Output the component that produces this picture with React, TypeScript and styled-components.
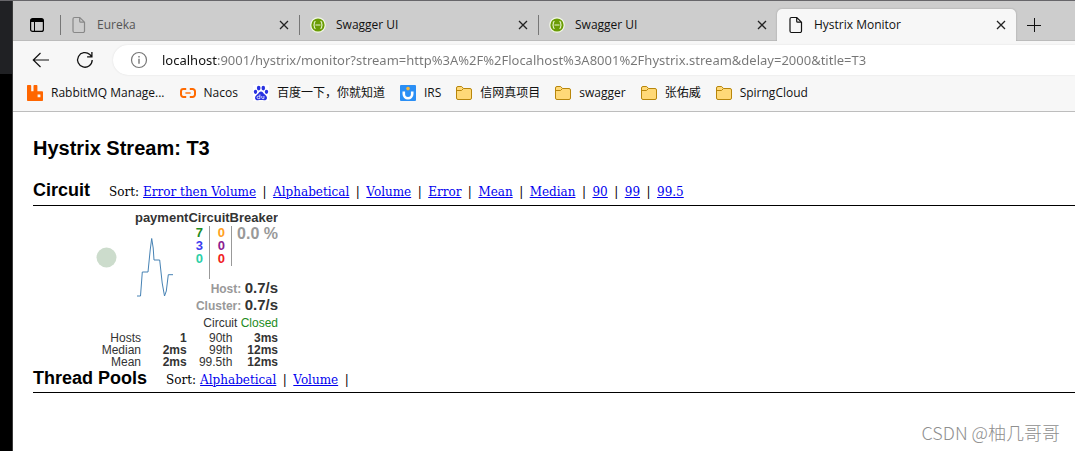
import React from "react";
import styled, { createGlobalStyle } from "styled-components";

const GlobalStyle = createGlobalStyle`
  * { box-sizing: border-box; }
  body { margin: 0; background: #fff; color: #000; }
  button { border: 0; padding: 0; background: none; font: inherit; color: inherit; cursor: pointer; }
  h1, h2, h3, ul, p { margin: 0; padding: 0; }
`;

const uiFont = `"Open Sans", "Noto Sans CJK SC", sans-serif`;
const pageFont = `"Liberation Sans", sans-serif`;

const Desktop = styled.div`
  display: flex;
  min-height: 100vh;
  position: relative;
  border-top: 1px solid #67666a;
`;

const Backdrop = styled.div`
  flex: 0 0 13px;
  border-right: 1px solid #3a3a3a;
  background: linear-gradient(#202124 73px, #000 73px);
`;

const BrowserWindow = styled.div`
  flex: 1;
  min-width: 0;
  display: flex;
  flex-direction: column;
`;

const TabBar = styled.header`
  display: flex;
  height: 40px;
  padding-top: 8px;
  background: #cdcdcd;
  box-shadow: inset 0 -1px #bcbcbc;
  font: 12px/32px ${uiFont};
`;

const TabActions = styled.button`
  flex: 0 0 47px;
  display: flex;
  align-items: center;
  justify-content: center;
`;

const Tabs = styled.div`
  display: flex;
  min-width: 0;
`;

const Tab = styled.div<{ $active?: boolean }>`
  flex: 0 1 239px;
  width: 239px;
  min-width: 0;
  display: flex;
  align-items: center;
  padding-right: 8px;
  border-radius: 5px 5px 0 0;
  background: ${(p) => (p.$active ? "#f7f7f7" : "none")};
  box-shadow: ${(p) => (p.$active ? "0 0 2px #999" : "none")};
  clip-path: inset(-4px -4px 0 -4px);

  &::before {
    content: "";
    flex: 0 0 1px;
    height: 20px;
    background: ${(p) => (p.$active ? "none" : "#777")};
  }
`;

const TabLabel = styled.button<{ $muted?: boolean }>`
  flex: 1;
  min-width: 0;
  display: flex;
  align-items: center;
  gap: 9px;
  padding-left: 9px;
  color: ${(p) => (p.$muted ? "#555" : "#111")};
`;

const TabIcon = styled.span`
  flex: 0 0 18px;
  display: flex;
  justify-content: center;
`;

const IconButton = styled.button<{ $size: number }>`
  flex: 0 0 ${(p) => p.$size}px;
  height: ${(p) => p.$size}px;
  display: flex;
  align-items: center;
  justify-content: center;
`;

const NewTab = styled(IconButton)`
  align-self: center;
  margin-left: 2px;
`;

const Toolbar = styled.div`
  display: flex;
  align-items: center;
  gap: 12px;
  height: 37px;
  padding-left: 12px;
  background: #f7f7f7;
`;

const AddressBar = styled.label`
  flex: 1;
  min-width: 0;
  display: flex;
  align-items: center;
  height: 30px;
  padding-left: 17px;
  gap: 14px;
  border-radius: 15px 0 0 15px;
  background: #fff;
  box-shadow: 0 0 2px #ddd;
`;

/* The host part of the address is darker than the port and path. */
const AddressInput = styled.input`
  flex: 1;
  min-width: 0;
  height: 24px;
  padding: 0;
  border: 0;
  outline: 0;
  font: 13px/24px "Noto Sans", sans-serif;
  color: transparent;
  background: linear-gradient(90deg, #111 56px, #767676 56px);
  background-clip: text;
  -webkit-background-clip: text;
`;

const Bookmarks = styled.nav`
  display: flex;
  align-items: center;
  gap: 15px;
  height: 34px;
  padding: 0 0 4px 14px;
  background: #f7f7f7;
  border-bottom: 1px solid #bdbdbd;
  font: 12px/20px ${uiFont};
`;

const Bookmark = styled.a`
  display: flex;
  align-items: center;
  gap: 8px;
  color: #111;
  text-decoration: none;
  white-space: nowrap;
`;

const Page = styled.main`
  padding: 24px 0 0 20px;
`;

const Title = styled.h1`
  font: bold 20px/24px ${pageFont};
`;

const SectionHeader = styled.div<{ $spaced?: boolean }>`
  display: flex;
  align-items: baseline;
  gap: 19px;
  height: ${(p) => (p.$spaced ? 46 : 27)}px;
  padding-top: ${(p) => (p.$spaced ? 20 : 2)}px;
  border-bottom: 1px solid #000;
`;

const SectionTitle = styled.h2`
  font: bold 18px/20px ${pageFont};
`;

const SortBar = styled.nav`
  display: flex;
  font: 12px/18px "DejaVu Serif", serif;
  white-space: nowrap;
`;

const SortLabel = styled.span`
  margin-right: 4px;
`;

const SortLink = styled.a`
  color: #00e;
`;

const Divider = styled.span`
  width: 17px;
  text-align: center;
`;

const Monitor = styled.article`
  width: 245px;
  height: 160px;
  padding-top: 4px;
  overflow: hidden;
  color: #333;
  font: 12px/12px ${pageFont};
`;

const CircuitName = styled.h3`
  font: bold 13px/16px ${pageFont};
  text-align: right;
`;

const Summary = styled.div`
  display: flex;
  height: 54px;
  justify-content: flex-end;
`;

const Chart = styled.svg`
  flex: 1;
  height: 74px;
`;

const Counters = styled.div<{ $tall?: boolean }>`
  display: flex;
  flex-direction: column;
  align-items: flex-end;
  height: ${(p) => (p.$tall ? 53 : 40)}px;
  padding-right: 6px;
  border-right: 1px solid #999;
  width: ${(p) => (p.$tall ? 27 : 22)}px;
  font: bold 13px/13px ${pageFont};
`;

const Counter = styled.span<{ $color: string }>`
  color: ${(p) => p.$color};
`;

const ErrorRate = styled.div`
  width: 46px;
  text-align: right;
  font: bold 16px/16px ${pageFont};
  color: #999;
`;

const Rate = styled.p`
  height: 17px;
  text-align: right;
  font: bold 12px/16px ${pageFont};
  color: #999;
`;

const RateValue = styled.strong`
  font-size: 15px;
  color: #333;
`;

const Status = styled.p`
  padding: 1px 0;
  line-height: 16px;
  text-align: right;
`;

const Closed = styled.span`
  color: #228b22;
`;

const Latency = styled.table`
  width: 100%;
  table-layout: fixed;
  border-collapse: collapse;
  line-height: 12px;
  text-align: right;

  th, td { padding: 0; text-align: right; }
  th { font-weight: normal; }
  th:first-child { width: 108px; }
  td { font-weight: bold; }
`;

const Watermark = styled.div`
  position: absolute;
  right: 15px;
  bottom: 6px;
  font: 300 18px/26px "Noto Sans CJK SC", sans-serif;
  color: #8f8f8f;
`;

const PageIcon = ({ color }: { color: string }) => (
  <svg width="14" height="18" viewBox="0 0 14 18" fill="none" stroke={color} strokeWidth="1.2">
    <path d="M2.5 1.5h5.3l4.7 4.7v8.8a1.5 1.5 0 0 1-1.5 1.500H2.500A1.500 1.500 0 0 1 1 15V3a1.500 1.500 0 0 1 1.500-1.500zM7.700 1.500v3.700a1 1 0 0 0 1 1h3.800" />
  </svg>
);

const SwaggerIcon = () => (
  <svg width="16" height="16" viewBox="0 0 16 16">
    <circle cx="8" cy="8" r="7.8" fill="#f3f8e8" />
    <circle cx="8" cy="8" r="6.6" fill="#6a9c05" />
    <path d="M5.6 4.6q-1.4 0-1.3 1.4v1q0 1-.9 1 .9 0 .9 1v1q0 1.4 1.3 1.4M10.4 4.6q1.4 0 1.3 1.4v1q0 1 .9 1-.9 0-.9 1v1q0 1.4-1.3 1.4M5.5 8h5" fill="none" stroke="#e8f3cf" strokeWidth="1.1" />
  </svg>
);

const CloseIcon = () => (
  <svg width="10" height="10" viewBox="0 0 10 10" stroke="#222" strokeWidth="1.3">
    <path d="M1 1l8 8M9 1l-8 8" />
  </svg>
);

const PlusIcon = () => (
  <svg width="14" height="14" viewBox="0 0 14 14" stroke="#111" strokeWidth="1">
    <path d="M7.5 0v14M0 7.5h14" />
  </svg>
);

const TabActionsIcon = () => (
  <svg width="14" height="14" viewBox="0 0 14 14" fill="none" stroke="#000">
    <rect x=".6" y=".6" width="12.8" height="12.8" rx="2" strokeWidth="1.2" />
    <path d="M1 2.5h12" strokeWidth="3" />
    <path d="M4.5 3v10.5" strokeWidth="1" />
  </svg>
);

const BackIcon = () => (
  <svg width="18" height="16" viewBox="0 0 18 16" fill="none" stroke="#111" strokeWidth="1.2">
    <path d="M8.5 1L1.3 8l7.2 7M1.3 8H17" />
  </svg>
);

const ReloadIcon = () => (
  <svg width="18" height="18" viewBox="0 0 18 18" fill="none" stroke="#111" strokeWidth="1.3">
    <path d="M16.2 9A7.3 7.3 0 1 1 13.8 3.500L15.700 5.600M15.900 1v4.800h-4.800" />
  </svg>
);

const InfoIcon = () => (
  <svg width="18" height="18" viewBox="0 0 18 18" fill="none" stroke="#777" strokeWidth="1.2">
    <circle cx="9" cy="9" r="7.5" />
    <path d="M9 7.8v5M9 5v1.4" strokeWidth="1.4" />
  </svg>
);

const RabbitIcon = () => (
  <svg width="16" height="16" viewBox="0 0 16 16">
    <path fill="#f60" fillRule="evenodd" d="M.8 0h2.6q.8 0 .8.8v5.4h2.3V.8q0-.8.8-.8h2.3q.8 0 .8.8v5.4h4.8q.8 0 .8.8v8.2q0 .8-.8.8H.8q-.8 0-.8-.8V.8Q0 0 .8 0zm9.8 9.4v2.8h2.800V9.400z" />
  </svg>
);

const NacosIcon = () => (
  <svg width="16" height="16" viewBox="0 0 16 16" fill="none" stroke="#ff6a00" strokeWidth="2">
    <path d="M6.200 4H3.400A2.400 2.400 0 0 0 1 6.400v3.200A2.400 2.400 0 0 0 3.400 12h2.800M9.800 4h2.800A2.400 2.400 0 0 1 15 6.400v3.200a2.400 2.400 0 0 1-2.400 2.400H9.800" />
    <path d="M5.400 8h5.200" strokeWidth="1.4" />
  </svg>
);

const BaiduIcon = () => (
  <svg width="16" height="16" viewBox="0 0 16 16" fill="#2932e1">
    <rect width="16" height="16" fill="#fff" />
    <ellipse cx="5.7" cy="3.1" rx="1.8" ry="2.3" />
    <ellipse cx="10.3" cy="3.1" rx="1.8" ry="2.3" />
    <ellipse cx="2.5" cy="6.8" rx="1.7" ry="2.1" />
    <ellipse cx="13.5" cy="6.8" rx="1.7" ry="2.1" />
    <path d="M8 6.400c1.500 0 2.200 1.400 3.200 2.500 1.200 1.200 2.900 2 2.800 4-.1 1.800-1.500 2.500-2.900 2.400-1-.1-2-.3-3.100-.3s-2.100.2-3.100.3c-1.400.1-2.800-.6-2.900-2.400-.1-2 1.600-2.800 2.800-4 1-1.100 1.700-2.500 3.200-2.500z" />
    <path d="M6.900 9.400v4.200H5.300a1.100 1.100 0 0 1 0-2.400h1.600M8.800 11v1.800q0 .8.800.8h1.300V11" fill="none" stroke="#fff" strokeWidth=".8" />
  </svg>
);

const IrsIcon = () => (
  <svg width="16" height="16" viewBox="0 0 16 16">
    <rect width="16" height="16" rx="1" fill="#2b8ff5" />
    <path d="M3.800 6.500v2.500a4.200 4.200 0 0 0 8.400 0V6.500" fill="none" stroke="#fff" strokeWidth="2.6" />
    <circle cx="8" cy="3.6" r="1.8" fill="#f6b73c" />
  </svg>
);

const FolderIcon = () => (
  <svg width="16" height="14" viewBox="0 0 16 14" stroke="#b8860b">
    <path d="M.5 2A1.500 1.500 0 0 1 2 .5h3.600l2 2H14A1.500 1.500 0 0 1 15.500 4v8a1.500 1.500 0 0 1-1.500 1.500H2A1.500 1.500 0 0 1 .5 12z" fill="#ffd977" />
    <path d="M.5 4.500h5l2-2" fill="none" />
  </svg>
);

const tabs = [
  { title: "Eureka", icon: <PageIcon color="#888" />, muted: true },
  { title: "Swagger UI", icon: <SwaggerIcon /> },
  { title: "Swagger UI", icon: <SwaggerIcon /> },
  { title: "Hystrix Monitor", icon: <PageIcon color="#111" />, active: true },
];

const bookmarks = [
  { title: "RabbitMQ Manage...", icon: <RabbitIcon /> },
  { title: "Nacos", icon: <NacosIcon /> },
  { title: "百度一下，你就知道", icon: <BaiduIcon /> },
  { title: "IRS", icon: <IrsIcon /> },
  { title: "信网真项目", icon: <FolderIcon /> },
  { title: "swagger", icon: <FolderIcon /> },
  { title: "张佑威", icon: <FolderIcon /> },
  { title: "SpirngCloud", icon: <FolderIcon /> },
];

const latency = [
  ["Hosts", "1", "90th", "3ms"],
  ["Median", "2ms", "99th", "12ms"],
  ["Mean", "2ms", "99.5th", "12ms"],
];

const Sort = ({ keys, trailing }: { keys: string[]; trailing?: boolean }) => (
  <SortBar>
    <SortLabel>Sort:</SortLabel>
    {keys.map((key, i) => (
      <React.Fragment key={key}>
        <SortLink href="#">{key}</SortLink>
        {(trailing || i < keys.length - 1) && <Divider>|</Divider>}
      </React.Fragment>
    ))}
  </SortBar>
);

export default function App() {
  return (
    <Desktop>
      <GlobalStyle />
      <Backdrop />
      <BrowserWindow>
        <TabBar>
          <TabActions aria-label="Tab actions"><TabActionsIcon /></TabActions>
          <Tabs>
            {tabs.map((tab, i) => (
              <Tab key={i} $active={tab.active}>
                <TabLabel $muted={tab.muted}>
                  <TabIcon>{tab.icon}</TabIcon>
                  {tab.title}
                </TabLabel>
                <IconButton $size={14} aria-label="Close tab"><CloseIcon /></IconButton>
              </Tab>
            ))}
          </Tabs>
          <NewTab $size={32} aria-label="New tab"><PlusIcon /></NewTab>
        </TabBar>
        <Toolbar>
          <IconButton $size={32} aria-label="Back"><BackIcon /></IconButton>
          <IconButton $size={32} aria-label="Reload"><ReloadIcon /></IconButton>
          <AddressBar>
            <InfoIcon />
            <AddressInput
              aria-label="Address"
              defaultValue="localhost:9001/hystrix/monitor?stream=http%3A%2F%2Flocalhost%3A8001%2Fhystrix.stream&delay=2000&title=T3"
            />
          </AddressBar>
        </Toolbar>
        <Bookmarks>
          {bookmarks.map((b) => (
            <Bookmark href="#" key={b.title}>{b.icon}{b.title}</Bookmark>
          ))}
        </Bookmarks>
        <Page>
          <Title>Hystrix Stream: T3</Title>
          <SectionHeader $spaced>
            <SectionTitle>Circuit</SectionTitle>
            <Sort keys={["Error then Volume", "Alphabetical", "Volume", "Error", "Mean", "Median", "90", "99", "99.5"]} />
          </SectionHeader>
          <Monitor>
            <CircuitName>paymentCircuitBreaker</CircuitName>
            <Summary>
              <Chart viewBox="33 226 150 74" preserveAspectRatio="xMinYMin">
                <circle cx="106.5" cy="257.5" r="10" fill="#ccdccc" />
                <path
                  d="M137 296h3.500l1.800-24h5.700l2.200-22 1.500-11.500 1.500 9.500.8 12h5.700l2.500 23 2.300 13 1.800-5 2-16.300h4.700"
                  fill="none"
                  stroke="steelblue"
                />
              </Chart>
              <Counters $tall>
                <Counter $color="#228b22">7</Counter>
                <Counter $color="#3c3cf0">3</Counter>
                <Counter $color="#2cd0a8">0</Counter>
              </Counters>
              <Counters>
                <Counter $color="#ffa020">0</Counter>
                <Counter $color="#8b2090">0</Counter>
                <Counter $color="#f02020">0</Counter>
              </Counters>
              <ErrorRate>0.0 %</ErrorRate>
            </Summary>
            <Rate>Host: <RateValue>0.7/s</RateValue></Rate>
            <Rate>Cluster: <RateValue>0.7/s</RateValue></Rate>
            <Status>Circuit <Closed>Closed</Closed></Status>
            <Latency>
              <tbody>
                {latency.map(([a, b, c, d]) => (
                  <tr key={a}><th>{a}</th><td>{b}</td><th>{c}</th><td>{d}</td></tr>
                ))}
              </tbody>
            </Latency>
          </Monitor>
          <SectionHeader>
            <SectionTitle>Thread Pools</SectionTitle>
            <Sort keys={["Alphabetical", "Volume"]} trailing />
          </SectionHeader>
        </Page>
      </BrowserWindow>
      <Watermark>CSDN @柚几哥哥</Watermark>
    </Desktop>
  );
}
